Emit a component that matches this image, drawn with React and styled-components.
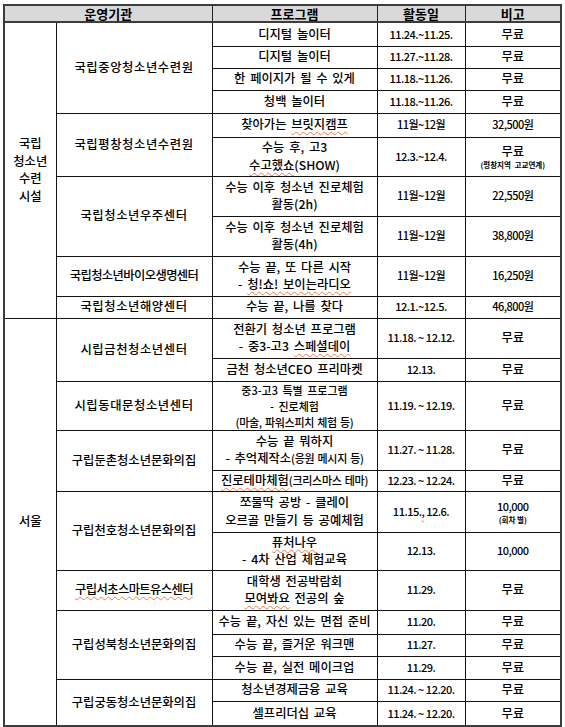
import styled, { createGlobalStyle } from 'styled-components';

const GlobalStyle = createGlobalStyle`
  body {
    margin: 0;
    background: #fff;
    font-family: "Noto Sans CJK KR", "Noto Sans", sans-serif;
  }
`;

const Sheet = styled.table`
  margin: 4px 0 0 3px;
  width: 557px;
  table-layout: fixed;
  border-collapse: collapse;
  border: 2px solid #3c3c3c;
  color: #000;
  font-size: 12px;
  line-height: 17.5px;
`;

const Row = styled.tr`
  height: ${(p) => p.$h}px;
`;

const Head = styled.th`
  padding: 0;
  height: 15px;
  line-height: 14px;
  font-size: 13px;
  background: #d9d9d9;
  font-weight: 700;
  border: 1px solid #222;
  border-bottom: 2px solid #3c3c3c;
`;

const Cell = styled.td`
  padding: 0;
  border: 1px solid #111;
  text-align: center;
  vertical-align: middle;
  overflow: hidden;
  white-space: nowrap;
  font-weight: 500;
  font-size: ${(p) => (p.$num ? '11px' : p.$compact ? '11px' : '12.3px')};
  letter-spacing: ${(p) =>
    p.$num ? '-0.5px' : p.$tight ? '-0.6px' : p.$name ? '0.6px' : '0'};
  line-height: ${(p) => (p.$compact ? '16px' : '17.5px')};
  word-spacing: ${(p) => (p.$num ? '0' : '2px')};
`;

const Sq = styled.span`
  text-decoration: underline wavy #ee7a4c;
  text-decoration-thickness: 1px;
  text-underline-offset: 2px;
  text-decoration-skip-ink: none;
`;

const Small = styled.span`
  font-size: 11px;
  letter-spacing: -0.3px;
  word-spacing: 1px;
`;

const Note = styled.div`
  font-size: 7.5px;
  line-height: 10px;
  font-weight: 700;
  letter-spacing: 0;
`;

export default function App() {
  return (
    <>
      <GlobalStyle />
      <Sheet>
        <colgroup>
          <col style={{ width: 52 }} />
          <col style={{ width: 156 }} />
          <col style={{ width: 165 }} />
          <col style={{ width: 88 }} />
          <col style={{ width: 96 }} />
        </colgroup>
        <thead>
          <tr>
            <Head colSpan={2}>운영기관</Head>
            <Head>프로그램</Head>
            <Head>활동일</Head>
            <Head>비고</Head>
          </tr>
        </thead>
        <tbody>
          <Row $h={24}>
            <Cell rowSpan={10}>
              국립<br />청소년<br />수련<br />시설
            </Cell>
            <Cell rowSpan={4} $name>국립중앙청소년수련원</Cell>
            <Cell>디지털 놀이터</Cell>
            <Cell $num>11.24.~11.25.</Cell>
            <Cell>무료</Cell>
          </Row>
          <Row $h={22}>
            <Cell>디지털 놀이터</Cell>
            <Cell $num>11.27.~11.28.</Cell>
            <Cell>무료</Cell>
          </Row>
          <Row $h={22}>
            <Cell>한 페이지가 될 수 있게</Cell>
            <Cell $num>11.18.~11.26.</Cell>
            <Cell>무료</Cell>
          </Row>
          <Row $h={23}>
            <Cell>청백 놀이터</Cell>
            <Cell $num>11.18.~11.26.</Cell>
            <Cell>무료</Cell>
          </Row>
          <Row $h={24}>
            <Cell rowSpan={2} $name>국립평창청소년수련원</Cell>
            <Cell>
              찾아가는 <Sq>브릿지캠프</Sq>
            </Cell>
            <Cell $num>11월~12월</Cell>
            <Cell $num>32,500원</Cell>
          </Row>
          <Row $h={39}>
            <Cell>
              수능 후, 고3
              <br />
              <Sq>수고했쇼</Sq>(SHOW)
            </Cell>
            <Cell $num>12.3.~12.4.</Cell>
            <Cell>
              무료
              <Note>(평창지역 고교연계)</Note>
            </Cell>
          </Row>
          <Row $h={40}>
            <Cell rowSpan={2} $name>국립청소년우주센터</Cell>
            <Cell>
              수능 이후 청소년 진로체험
              <br />
              활동(2h)
            </Cell>
            <Cell $num>11월~12월</Cell>
            <Cell $num>22,550원</Cell>
          </Row>
          <Row $h={40}>
            <Cell>
              수능 이후 청소년 진로체험
              <br />
              활동(4h)
            </Cell>
            <Cell $num>11월~12월</Cell>
            <Cell $num>38,800원</Cell>
          </Row>
          <Row $h={40}>
            <Cell $tight>국립청소년바이오생명센터</Cell>
            <Cell>
              수능 끝, 또 다른 시작
              <br />- <Sq>청!쇼! 보이는라디오</Sq>
            </Cell>
            <Cell $num>11월~12월</Cell>
            <Cell $num>16,250원</Cell>
          </Row>
          <Row $h={22}>
            <Cell $name>국립청소년해양센터</Cell>
            <Cell>수능 끝, 나를 찾다</Cell>
            <Cell $num>12.1.~12.5.</Cell>
            <Cell $num>46,800원</Cell>
          </Row>

          <Row $h={40}>
            <Cell rowSpan={13}>서울</Cell>
            <Cell rowSpan={2} $name>시립금천청소년센터</Cell>
            <Cell>
              전환기 청소년 프로그램
              <br />- 중3-고3 <Sq>스페셜데이</Sq>
            </Cell>
            <Cell $num>11.18. ~ 12.12.</Cell>
            <Cell>무료</Cell>
          </Row>
          <Row $h={23}>
            <Cell>금천 청소년CEO 프리마켓</Cell>
            <Cell $num>12.13.</Cell>
            <Cell>무료</Cell>
          </Row>
          <Row $h={49}>
            <Cell $name>시립동대문청소년센터</Cell>
            <Cell $compact>
              중3-고3 특별 프로그램
              <br />- 진로체험
              <br />
              <Small>(마술, 파워스피치 체험 등)</Small>
            </Cell>
            <Cell $num>11.19. ~ 12.19.</Cell>
            <Cell>무료</Cell>
          </Row>
          <Row $h={40}>
            <Cell rowSpan={2}>구립둔촌청소년문화의집</Cell>
            <Cell>
              수능 끝 뭐하지
              <br />- 추억제작소<Small>(응원 메시지 등)</Small>
            </Cell>
            <Cell $num>11.27. ~ 11.28.</Cell>
            <Cell>무료</Cell>
          </Row>
          <Row $h={21}>
            <Cell>
              <Sq>진로테마체험</Sq>
              <Small>(크리스마스 테마)</Small>
            </Cell>
            <Cell $num>12.23. ~ 12.24.</Cell>
            <Cell>무료</Cell>
          </Row>
          <Row $h={41}>
            <Cell rowSpan={2}>구립천호청소년문화의집</Cell>
            <Cell>
              쪼물딱 공방 - 클레이
              <br />
              오르골 만들기 등 공예체험
            </Cell>
            <Cell $num>
              11.15.<Sq>,</Sq> 12.6.
            </Cell>
            <Cell $num>
              10,000
              <Note>(회차 별)</Note>
            </Cell>
          </Row>
          <Row $h={38}>
            <Cell>
              <Sq>퓨처나우</Sq>
              <br />- 4차 산업 체험교육
            </Cell>
            <Cell $num>12.13.</Cell>
            <Cell $num>10,000</Cell>
          </Row>
          <Row $h={40}>
            <Cell $tight>
              <Sq>구립서초스마트유스센터</Sq>
            </Cell>
            <Cell>
              대학생 전공박람회
              <br />
              <Sq>모여봐요</Sq> 전공의 숲
            </Cell>
            <Cell $num>11.29.</Cell>
            <Cell>무료</Cell>
          </Row>
          <Row $h={24}>
            <Cell rowSpan={3}>구립성북청소년문화의집</Cell>
            <Cell>수능 끝, 자신 있는 면접 준비</Cell>
            <Cell $num>11.20.</Cell>
            <Cell>무료</Cell>
          </Row>
          <Row $h={22}>
            <Cell>수능 끝, 즐거운 워크맨</Cell>
            <Cell $num>11.27.</Cell>
            <Cell>무료</Cell>
          </Row>
          <Row $h={23}>
            <Cell>수능 끝, 실전 메이크업</Cell>
            <Cell $num>11.29.</Cell>
            <Cell>무료</Cell>
          </Row>
          <Row $h={22}>
            <Cell rowSpan={2}>구립궁동청소년문화의집</Cell>
            <Cell>청소년경제금융 교육</Cell>
            <Cell $num>11.24. ~ 12.20.</Cell>
            <Cell>무료</Cell>
          </Row>
          <Row $h={25}>
            <Cell>셀프리더십 교육</Cell>
            <Cell $num>11.24. ~ 12.20.</Cell>
            <Cell>무료</Cell>
          </Row>
        </tbody>
      </Sheet>
    </>
  );
}
